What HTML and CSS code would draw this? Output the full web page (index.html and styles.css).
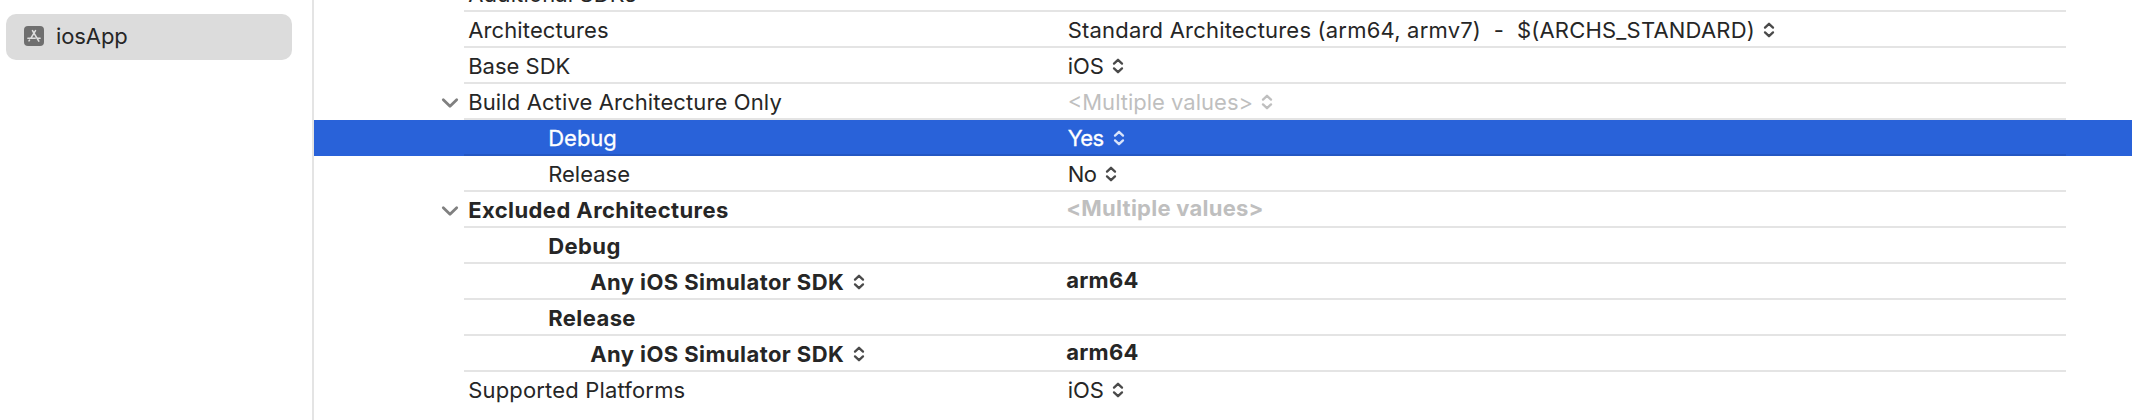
FILE: index.html
```html
<!DOCTYPE html>
<html lang="en">
<head>
<meta charset="utf-8">
<title>Build Settings</title>
<link rel="stylesheet" href="styles.css">
</head>
<body>
<svg class="defs" width="0" height="0">
  <symbol id="updown" viewBox="0 0 12 16"><path d="M2 5.6 6 1.8l4 3.8M2 10.4l4 3.8 4-3.8"/></symbol>
  <symbol id="chevron" viewBox="0 0 18 12"><path d="M2.3 2.7 9 9.2l6.7-6.5"/></symbol>
</svg>
<div class="window">
  <nav class="sidebar">
    <div class="target">
      <svg class="app-icon" viewBox="0 0 20 20">
        <rect width="20" height="20" rx="4"/>
        <path d="M8.5 4.7 9.9 7.1M11.5 4.7 6.9 12.2M10.1 7.4l4.7 7.7M3.9 12.3h7.3M13.7 12.3h2.4M5.5 14.1l-.5.8"/>
      </svg>
      <span>iosApp</span>
    </div>
  </nav>
  <main class="settings">
    <div class="row"><div class="cells"><span class="name t1">Additional SDKs</span></div></div>
    <div class="row"><div class="cells"><span class="name t1">Architectures</span><span class="value"><span class="t3">Standard Architectures (arm64, armv7)&nbsp; -&nbsp; $(ARCHS_STANDARD)</span><svg class="updown"><use href="#updown"/></svg></span></div></div>
    <div class="row"><div class="cells"><span class="name">Base SDK</span><span class="value"><span>iOS</span><svg class="updown"><use href="#updown"/></svg></span></div></div>
    <div class="row"><svg class="chevron"><use href="#chevron"/></svg><div class="cells"><span class="name t1">Build Active Architecture Only</span><span class="value muted"><span>&lt;Multiple values&gt;</span><svg class="updown"><use href="#updown"/></svg></span></div></div>
    <div class="row selected"><div class="cells"><span class="name level1">Debug</span><span class="value"><span class="tight">Yes</span><svg class="updown"><use href="#updown"/></svg></span></div></div>
    <div class="row"><div class="cells"><span class="name level1">Release</span><span class="value"><span class="tight">No</span><svg class="updown"><use href="#updown"/></svg></span></div></div>
    <div class="row bold"><svg class="chevron"><use href="#chevron"/></svg><div class="cells"><span class="name">Excluded Architectures</span><span class="value muted">&lt;Multiple values&gt;</span></div></div>
    <div class="row bold"><div class="cells"><span class="name level1">Debug</span></div></div>
    <div class="row bold"><div class="cells"><span class="name level2"><span>Any iOS Simulator SDK</span><svg class="updown"><use href="#updown"/></svg></span><span class="value">arm64</span></div></div>
    <div class="row bold"><div class="cells"><span class="name level1">Release</span></div></div>
    <div class="row bold"><div class="cells"><span class="name level2"><span>Any iOS Simulator SDK</span><svg class="updown"><use href="#updown"/></svg></span><span class="value">arm64</span></div></div>
    <div class="row last"><div class="cells"><span class="name t2">Supported Platforms</span><span class="value"><span>iOS</span><svg class="updown"><use href="#updown"/></svg></span></div></div>
  </main>
</div>
</body>
</html>
```
FILE: styles.css
```css
* { box-sizing: border-box; }
body {
  margin: 0;
  background: #fff;
  color: #262626;
  font-family: Inter, "Liberation Sans", sans-serif;
  font-size: 22px;
  overflow: hidden;
}
.defs { display: block; height: 0; }
.window { display: flex; height: 420px; overflow: hidden; }
.sidebar {
  flex: none;
  width: 314px;
  padding: 14px 20px 0 6px;
  border-right: 2px solid #e4e4e4;
}
.target {
  display: flex;
  align-items: center;
  gap: 12px;
  width: 286px;
  height: 46px;
  padding: 0 0 2px 18px;
  border-radius: 10px;
  background: #dcdcdc;
  line-height: 44px;
  letter-spacing: -0.1px;
}
.app-icon { width: 20px; height: 20px; }
.app-icon rect { fill: #6f6f6f; }
.app-icon path { fill: none; stroke: #dedede; stroke-width: 1.6; stroke-linecap: round; }

.settings { flex: 1; margin-top: -24px; }
.row { display: flex; height: 36px; padding-left: 128px; }
.chevron {
  width: 18px;
  height: 12px;
  margin: 13px 4px 0 -1px;
  fill: none;
  stroke: #808080;
  stroke-width: 2.8;
  stroke-linecap: round;
  stroke-linejoin: round;
}
.cells {
  display: grid;
  grid-template-columns: 599.5px 1fr;
  width: 1602px;
  margin-left: 22px;
  padding: 1px 0 0 4.2px;
  border-bottom: 2px solid #e4e4e4;
  line-height: 34px;
  white-space: nowrap;
}
.chevron + .cells { margin-left: 1px; }
.last .cells { border-bottom-color: transparent; }
.name, .value { display: flex; height: 33px; }
.level1 { padding-left: 80px; }
.level2 { padding-left: 122px; }
.updown {
  flex: none;
  width: 12px;
  height: 16px;
  margin: 9px 0 0 8.4px;
  fill: none;
  stroke: #4a4a4a;
  stroke-width: 2.3;
  stroke-linecap: round;
  stroke-linejoin: round;
}
.t1 { letter-spacing: 0.12px; }
.t2 { letter-spacing: 0.17px; }
.t3 { letter-spacing: 0.2px; }
.tight { letter-spacing: -0.6px; }
.tight + .updown { margin-left: 9px; }
.muted { color: #bfbfbf; }
.muted .updown { stroke: #bfbfbf; }
.bold { font-weight: 700; letter-spacing: 0.42px; }
.bold .value { margin: -2px 0 0 -1.5px; letter-spacing: 0.25px; }
.selected { background: #2962d9; color: #fff; -webkit-text-stroke: 0.3px #fff; }
.selected .cells { border-bottom-color: #2457c3; }
.selected .updown { stroke: #d8e3fa; }
```
